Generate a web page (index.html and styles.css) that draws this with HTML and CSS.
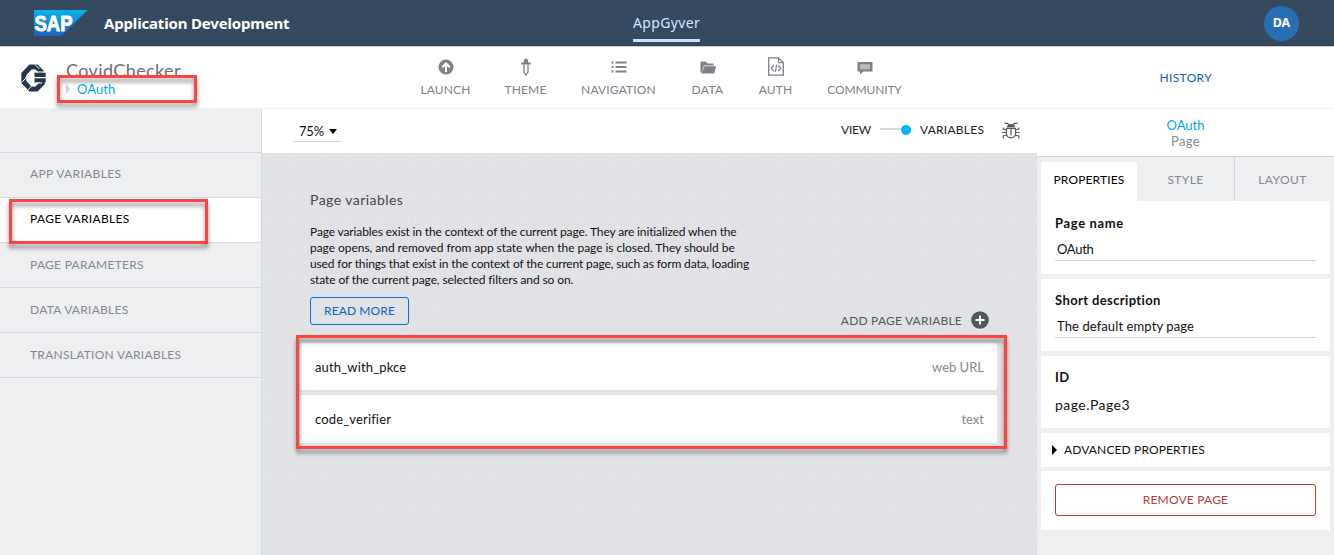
FILE: index.html
```html
<!DOCTYPE html>
<html lang="en">
<head>
<meta charset="utf-8">
<title>Application Development</title>
<link rel="stylesheet" href="styles.css">
</head>
<body>
<div class="app">
  <header class="topbar">
    <svg class="sap" width="54" height="26" viewBox="0 0 54 26">
      <defs><linearGradient id="g" x1="0" y1="0" x2="0" y2="1"><stop offset="0" stop-color="#06b3ee"/><stop offset="1" stop-color="#1e60bf"/></linearGradient></defs>
      <path d="M0 0H53.5L27.500 26H0Z" fill="url(#g)"/>
      <text class="sap-text" x="0.500" y="20.800" textLength="38" lengthAdjust="spacingAndGlyphs">SAP</text>
    </svg>
    <span class="product">Application Development</span>
    <span class="top-tab">AppGyver</span>
    <span class="avatar">DA</span>
  </header>

  <div class="header">
    <svg class="logo" width="26" height="28" viewBox="0 0 26 28">
      <path d="M21.500 9L15.500 3H9.500L2.800 10V18L9.500 25H15.500L22.500 18" fill="none" stroke="#253748" stroke-width="5"/>
      <path d="M13.500 8.500H24.700V13H13.500ZM13.500 14.300H24.700V18.500H13.500Z" fill="#253748"/>
      <path d="M14.500 8H25M4.500 14L12.500 5.500M4.500 14L12.500 22.500M.5 18.500L5 14M7 26L11 21.500M14 .5L18.500 5M14.500 19H21" fill="none" stroke="#fff" stroke-width="1"/>
    </svg>
    <div class="app-id">
      <div class="app-name">CovidChecker</div>
      <div class="crumb"><i class="crumb-arrow"></i><span>OAuth</span></div>
    </div>
    <nav class="nav">
      <div class="nav-item launch"><svg width="18" height="20" viewBox="0 0 18 20"><circle cx="9" cy="10" r="7.500" fill="#7d8188"/><path d="M9 15V7M5.200 10.200L9 6.500L12.800 10.200" fill="none" stroke="#fff" stroke-width="2"/></svg><span>LAUNCH</span></div>
      <div class="nav-item theme"><svg width="18" height="20" viewBox="0 0 18 20"><path d="M6.800 5.500V4Q7 1.500 9 1.500T11.200 4V5.500H13.700V7.500H4.300V5.500Z" fill="#7d8188"/><path d="M7 7.500V15L9 18L11 15V7.500" fill="none" stroke="#7d8188" stroke-width="1.300"/></svg><span>THEME</span></div>
      <div class="nav-item navigation"><svg width="18" height="20" viewBox="0 0 18 20"><path d="M1.500 5.500H3.500M5.500 5.500H16.500M1.500 10H3.500M5.500 10H16.500M1.500 14.500H3.500M5.500 14.500H16.500" stroke="#7d8188" stroke-width="2"/></svg><span>NAVIGATION</span></div>
      <div class="nav-item data"><svg width="18" height="20" viewBox="0 0 18 20"><path d="M1.500 15.500V5.500Q1.500 4.500 2.500 4.500H6.500L8.500 6.500H14.500V8.500H5L2.500 15.500Z" fill="#7d8188"/><path d="M5.500 9.300H17.200L15.200 16.500H2.300Z" fill="#7d8188"/></svg><span>DATA</span></div>
      <div class="nav-item auth"><svg width="18" height="20" viewBox="0 0 18 20"><path d="M1.700 .8H11.500L16.300 5.600V18.200H1.700ZM11.500 .8V5.600H16.300" fill="none" stroke="#7d8188" stroke-width="1.300"/><path d="M6.800 8.500L4.300 11.300L6.800 14M11.200 8.500L13.700 11.300L11.200 14M9.700 7.500L8.300 15" fill="none" stroke="#7d8188" stroke-width="1.200"/></svg><span>AUTH</span></div>
      <div class="nav-item community"><svg width="18" height="20" viewBox="0 0 18 20"><path d="M2 5H16Q16.500 5 16.500 5.500V14Q16.500 14.500 16 14.500H7.500L4 17.500V14.500H2Q1.500 14.500 1.500 14V5.500Q1.500 5 2 5Z" fill="#7d8188"/><path d="M4 7.200H14V12.300H4Z" fill="#b9bcc0"/></svg><span>COMMUNITY</span></div>
    </nav>
    <span class="history">HISTORY</span>
    <div class="mark mark-crumb"></div>
  </div>

  <div class="main">
    <aside class="side">
      <div class="side-top"></div>
      <div class="side-item app-vars"><span>APP VARIABLES</span></div>
      <div class="side-item active page-vars"><span>PAGE VARIABLES</span><div class="mark mark-side"></div></div>
      <div class="side-item page-params"><span>PAGE PARAMETERS</span></div>
      <div class="side-item data-vars"><span>DATA VARIABLES</span></div>
      <div class="side-item trans-vars"><span>TRANSLATION VARIABLES</span></div>
    </aside>

    <section class="center">
      <div class="toolbar">
        <div class="zoom"><span>75%</span><i class="caret"></i></div>
        <span class="mode view">VIEW</span>
        <div class="switch"><i></i></div>
        <span class="mode vars">VARIABLES</span>
        <svg class="bug" width="18" height="18" viewBox="0 0 18 18"><path d="M4.500 5.500Q5.500 2 9 2T13.500 5.500Z" fill="#565a60"/><path d="M5 .8L7 3M13 .8L11 3M2.500 1.300H5M13 1.300H15.500M4.500 6.500H13.500V12Q13 15.800 9 15.800T4.500 12ZM9 7V13.500M4.500 8L1.200 7V5.500M13.500 8L16.800 7V5.500M4.500 10.500H.3M13.500 10.500H17.700M5 13L1.200 14V16.500M13 13L16.800 14V16.500" fill="none" stroke="#565a60" stroke-width="1.200"/></svg>
      </div>
      <div class="canvas">
        <svg class="grid" width="775" height="402"><defs><pattern id="dots" x="3" y="10.400" width="28.620" height="28.620" patternUnits="userSpaceOnUse"><path d="M.5 0V28.620M0 .5H28.620" stroke="#eaebee" stroke-width="1" stroke-dasharray="3 2" opacity=".55"/></pattern></defs><rect width="775" height="402" fill="url(#dots)"/></svg>
        <div class="content">
          <h1 class="title"><span>Page variables</span></h1>
          <p class="desc"><span class="l1">Page variables exist in the context of the current page. They are initialized when the</span><br><span class="l2">page opens, and removed from app state when the page is closed. They should be</span><br><span class="l3">used for things that exist in the context of the current page, such as form data, loading</span><br><span class="l4">state of the current page, selected filters and so on.</span></p>
          <div class="actions">
            <button class="read"><span>READ MORE</span></button>
            <div class="add"><span>ADD PAGE VARIABLE</span><svg width="18" height="18" viewBox="0 0 18 18"><circle cx="9" cy="9" r="8.800" fill="#53575d"/><path d="M9 4.500V13.500M4.500 9H13.500" stroke="#fff" stroke-width="1.800"/></svg></div>
          </div>
          <div class="vars-list">
            <div class="var"><span class="v1">auth_with_pkce</span><span class="type t1">web URL</span></div>
            <div class="var"><span class="v2">code_verifier</span><span class="type t2">text</span></div>
            <div class="mark mark-list"></div>
          </div>
        </div>
      </div>
    </section>

    <aside class="props">
      <div class="props-head"><span class="sel">OAuth</span><span class="kind">Page</span></div>
      <div class="tabs"><div class="tab on"><span>PROPERTIES</span></div><div class="tab"><span>STYLE</span></div><div class="tab last"><span>LAYOUT</span></div></div>
      <div class="cards">
        <div class="card name"><b>Page name</b><div class="field"><span>OAuth</span></div></div>
        <div class="card short"><b>Short description</b><div class="field wide"><span>The default empty page</span></div></div>
        <div class="card ident"><b>ID</b><div class="value">page.Page3</div></div>
        <div class="card adv"><i></i><span>ADVANCED PROPERTIES</span></div>
        <div class="card del"><button class="remove"><span>REMOVE PAGE</span></button></div>
      </div>
    </aside>
  </div>
</div>
</body>
</html>
```
FILE: styles.css
```css
* { box-sizing: border-box; }
body { margin: 0; background: #edeff1; font: 13px/16px Lato, "Liberation Sans", sans-serif; color: #111; }
.app { width: 1334px; height: 555px; overflow: hidden; display: flex; flex-direction: column; }
span, b { white-space: nowrap; }
button { font: inherit; background: none; padding: 0; }

.topbar { height: 47px; flex: none; background: #354a5f; border-bottom: 1px solid #cdd1d6; box-shadow: inset 0 -1px #2d4054; display: flex; align-items: flex-start; padding: 10px 35px 0 34px; }
.sap-text { font: bold 22px "Liberation Sans", sans-serif; fill: #fff; stroke: #fff; stroke-width: .9px; }
.product { margin: 3px 0 0 16px; width: 187px; font: bold 15px/20px "Noto Sans", sans-serif; letter-spacing: -.17px; color: #fff; }
.top-tab { margin: 2px 0 0 342px; width: 67px; height: 30px; font: 14px/21px "Noto Sans", sans-serif; letter-spacing: .35px; color: #d1e8ff; border-bottom: 3px solid #d1e0ff; border-radius: 1px; }
.avatar { margin: -4px 0 0 auto; width: 35px; height: 35px; border-radius: 50%; background: #286eb4; color: #fff; text-align: center; font: bold 12.500px/34px "Noto Sans", sans-serif; }

.header { height: 62px; flex: none; background: #fff; border-bottom: 1px solid #f3f4f5; position: relative; display: flex; }
.logo { margin: 17px 0 0 21px; }
.app-id { margin: 12px 0 0 19px; width: 130px; }
.app-name { font-size: 18px; line-height: 22px; letter-spacing: .4px; color: #6b6f76; }
.crumb { display: flex; align-items: center; height: 16px; color: #00a8f0; letter-spacing: .1px; }
.crumb-arrow { border: 5px solid transparent; border-left: 4px solid #ccd0d5; border-right: 0; margin-right: 7px; }
.nav { display: flex; margin: 10px 0 0 210.500px; color: #7d8188; font-size: 12px; letter-spacing: .15px; }
.nav-item { display: flex; flex-direction: column; align-items: center; }
.nav-item span { line-height: 16px; margin-top: 5px; }
.launch { width: 78px; } .theme { width: 82px; } .navigation { width: 104px; } .data { width: 74px; letter-spacing: .4px; } .auth { width: 62px; } .community { width: 116px; letter-spacing: -.15px; }
.history { margin: 23px 122px 0 auto; font-size: 12px; letter-spacing: .35px; color: #0a62c4; }
.mark { position: absolute; border: 3px solid #ff4343; filter: drop-shadow(0 4px 2px rgba(0,0,0,.42)); z-index: 2; }
.mark-crumb { left: 57px; top: 28px; width: 140px; height: 28px; }

.main { flex: 1; display: flex; }
.side { width: 262px; border-right: 1px solid #d5d8dc; background: #edeff1; }
.side-top { height: 44px; border-bottom: 1px solid #d5d8dc; }
.side-item { position: relative; height: 45px; border-bottom: 1px solid #d5d8dc; padding: 13px 0 0 30px; font-size: 12px; letter-spacing: .35px; color: #85898f; }
.side-item.active { background: #fff; color: #000; }
.page-params, .data-vars, .trans-vars { padding-top: 14px; letter-spacing: .27px; }
.mark-side { left: 9px; top: 1px; width: 199px; height: 45px; }

.center { width: 775px; }
.toolbar { height: 44px; background: #fff; display: flex; padding-left: 31px; }
.zoom { margin-top: 12px; width: 48px; height: 21px; border-bottom: 1px solid #d0d3d7; display: flex; padding-left: 6px; line-height: 21px; letter-spacing: -.2px; }
.caret { border: 4.500px solid transparent; border-top: 5px solid #000; border-bottom: 0; margin: 8px 0 0 5px; }
.mode { margin-top: 13px; font-size: 12px; letter-spacing: .25px; color: #222; }
.view { margin-left: 500px; width: 39px; letter-spacing: -.2px; }
.switch { margin: 19px 9px 0 0; width: 31px; height: 2px; background: #d6d8df; }
.switch i { display: block; width: 10px; height: 10px; margin: -3px 0 0 21px; border-radius: 50%; background: #00b2ff; position: relative; }
.vars { width: 82px; }
.bug { margin-top: 13px; }
.canvas { position: relative; height: 402px; background: #e1e2e6; }
.grid { position: absolute; left: 0; top: 0; }
.content { position: relative; padding: 37px 40px 0 38px; }
.title { margin: 0 0 14px 10px; font-size: 14px; line-height: 20px; font-weight: 400; letter-spacing: .45px; color: #44474c; }
.desc { margin: 0 0 9px 10px; font-size: 12px; line-height: 16px; color: #111; }
.l1 { letter-spacing: -.13px; } .l2 { letter-spacing: -.04px; } .l3 { letter-spacing: -.145px; } .l4 { letter-spacing: -.11px; }
.actions { display: flex; justify-content: space-between; padding-left: 10px; padding-right: 8px; height: 46px; }
.read { width: 99px; height: 28px; border: 1px solid #0a6ed1; border-radius: 3px; color: #0a62c4; font-size: 12px; letter-spacing: .1px; }
.add { display: flex; gap: 9px; margin-top: 14px; height: 18px; line-height: 19px; font-size: 12px; letter-spacing: .2px; color: #53575d; }
.vars-list { position: relative; display: grid; grid-template-rows: 47px 48px; gap: 5px; }
.var { background: #fff; border-radius: 2px; display: flex; justify-content: space-between; align-items: center; padding: 0 13px 0 15px; font-size: 13px; }
.v1, .v2 { letter-spacing: .15px; }
.type { color: #85898f; }
.mark-list { left: -4px; top: -8px; width: 711px; height: 114px; }

.props { width: 297px; background: #edeff1; }
.props-head { height: 48px; background: #fff; border-bottom: 1px solid #d5d8dc; display: flex; flex-direction: column; align-items: center; padding-top: 8px; letter-spacing: .3px; color: #85898f; }
.sel { color: #00a8f0; letter-spacing: 0; }
.tabs { display: flex; height: 44px; padding-left: 4px; font-size: 12px; letter-spacing: .4px; color: #85898f; }
.tab { width: 97px; text-align: center; padding-top: 15px; }
.tab.on { width: 96px; margin-top: 5px; padding-top: 10px; background: #fff; color: #000; border-radius: 2px 2px 0 0; letter-spacing: .15px; }
.tab.last { border-left: 1px solid #d5d8dc; width: 96px; }
.cards { display: flex; flex-direction: column; padding: 0 4px; gap: 5px; }
.card { background: #fff; padding: 14px 14px 0; }
.card b { display: block; font-size: 13px; letter-spacing: .38px; }
.name b { letter-spacing: .65px; }
.field { border-bottom: 1px solid #d0d3d7; padding: 10px 0 0 2px; box-sizing: content-box; height: 19px; letter-spacing: -.3px; }
.wide { letter-spacing: .1px; }
.name { height: 73px; } .short { height: 72px; padding-top: 13px; } .ident { height: 72px; padding-top: 13px; }
.value { margin-top: 12px; font-size: 14px; letter-spacing: .45px; }
.adv { height: 34px; padding: 0 0 0 11px; display: flex; align-items: center; font-size: 12px; letter-spacing: .13px; }
.adv i { border: 5px solid transparent; border-left: 5px solid #000; border-right: 0; margin-right: 7px; }
.del { height: 59px; margin-top: -1px; padding-top: 13px; }
.remove { width: 261px; height: 32px; border: 1px solid #bb3b3b; border-radius: 3px; color: #b43c3c; font-size: 12px; letter-spacing: .2px; }
```
